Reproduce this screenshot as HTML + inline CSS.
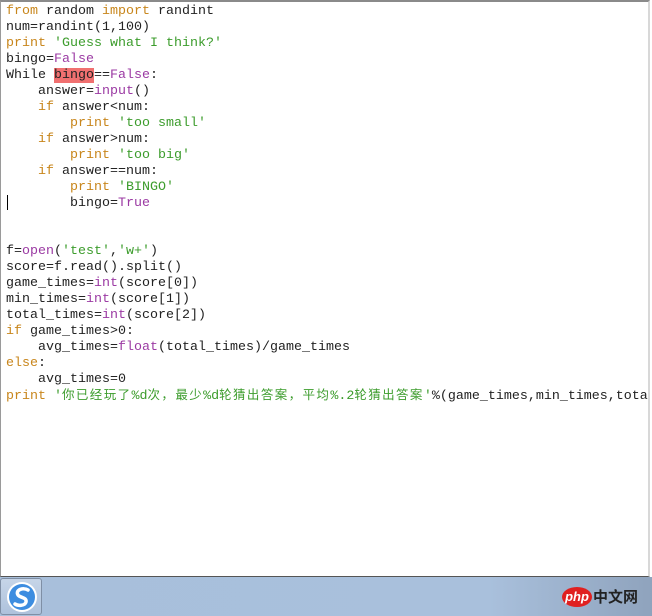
<!DOCTYPE html>
<html><head><meta charset="utf-8"><style>
html,body{margin:0;padding:0;width:652px;height:616px;overflow:hidden;background:#fff;}
.win{position:absolute;left:0;top:0;width:650px;height:577px;border-left:1px solid #9a9a9a;border-top:2px solid #8a8a8a;border-right:2px solid #d8d8d8;border-bottom:1px solid #555;box-sizing:border-box;background:#fff;}
pre{position:absolute;left:6px;top:4px;margin:0;font-family:"Liberation Mono","Noto Sans CJK SC",monospace;font-size:13.33px;line-height:16px;color:#222;white-space:pre;}
.k{color:#c8861c}.s{color:#3c9c2c}.p{color:#9b3aa3}
.hl{background:#f07070}
.cj{font-size:12.5px;letter-spacing:1.4px}
.cur{position:absolute;left:7px;top:195px;width:1px;height:15px;background:#000}
.tb{position:absolute;left:0;top:577px;width:652px;height:39px;background:linear-gradient(90deg,#a8bfdb 0%,#a9c0dc 75%,#8fa3bd 100%);}
.btn{position:absolute;left:0;top:1px;width:42px;height:37px;border:1px solid #7f8fa5;border-radius:3px;background:linear-gradient(#c6d5e8,#aec2dc);box-sizing:border-box;}
</style></head><body>
<div class="win"></div>
<pre><span class="k">from</span> random <span class="k">import</span> randint
num=randint(1,100)
<span class="k">print</span> <span class="s">'Guess what I think?'</span>
bingo=<span class="p">False</span>
While <span class="hl">bingo</span>==<span class="p">False</span>:
    answer=<span class="p">input</span>()
    <span class="k">if</span> answer&lt;num:
        <span class="k">print</span> <span class="s">'too small'</span>
    <span class="k">if</span> answer&gt;num:
        <span class="k">print</span> <span class="s">'too big'</span>
    <span class="k">if</span> answer==num:
        <span class="k">print</span> <span class="s">'BINGO'</span>
        bingo=<span class="p">True</span>


f=<span class="p">open</span>(<span class="s">'test'</span>,<span class="s">'w+'</span>)
score=f.read().split()
game_times=<span class="p">int</span>(score[0])
min_times=<span class="p">int</span>(score[1])
total_times=<span class="p">int</span>(score[2])
<span class="k">if</span> game_times&gt;0:
    avg_times=<span class="p">float</span>(total_times)/game_times
<span class="k">else</span>:
    avg_times=0
<span class="k">print</span> <span class="s">'<span class="cj">你已经玩了</span>%d<span class="cj">次，最少</span>%d<span class="cj">轮猜出答案，平均</span>%.2<span class="cj">轮猜出答案</span>'</span>%(game_times,min_times,tota</pre>
<div class="cur"></div>
<div class="tb">
<div class="btn">
<svg width="40" height="36" viewBox="0 0 40 36" style="position:absolute;left:0;top:0">
<circle cx="21" cy="18" r="15" fill="#fff"/>
<circle cx="21" cy="18" r="13" fill="#3d8de0"/>
<path d="M27 11 C22 8 14 11 17 16 C19 19 26 18 25 23 C24 27 17 27 14 25" stroke="#fff" stroke-width="3.5" fill="none" stroke-linecap="round"/>
</svg>
</div>
<div style="position:absolute;left:562px;top:10px;width:30px;height:20px;border-radius:50%;background:#e02020;color:#fff;font:italic bold 13px 'Liberation Sans',sans-serif;text-align:center;line-height:19px">php</div>
<div style="position:absolute;left:593px;top:10px;font:bold 15px 'Noto Sans CJK SC',sans-serif;color:#222;line-height:20px">中文网</div>
</div>
</body></html>
